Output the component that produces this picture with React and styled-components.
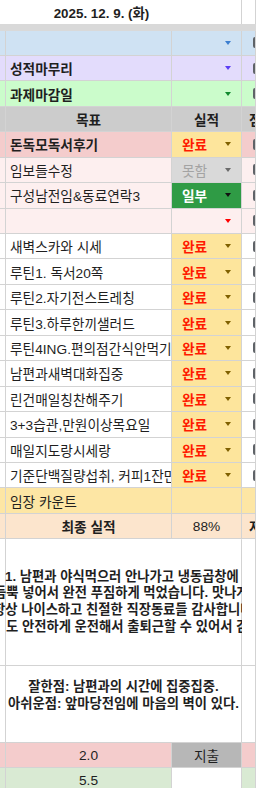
import styled, { createGlobalStyle } from "styled-components";

const GlobalStyle = createGlobalStyle`
  html, body { margin: 0; padding: 0; background: #fff; }
  body {
    font-family: "Liberation Sans", "Noto Sans CJK KR", sans-serif;
    overflow: hidden;
  }
`;

const ROW_H = 25.44;
const LINE = "#d3d3d3";

const Sheet = styled.div`
  width: 256px;
  height: 788px;
  overflow: hidden;
  font-size: 13.7px;
  color: #1f1f1f;
`;

const Row = styled.div`
  display: grid;
  grid-template-columns: 6px 166px 70px 1fr;
  height: ${(p) => p.$h || ROW_H}px;
  background: ${(p) => p.$bg || "#fff"};
`;

const Cell = styled.div`
  box-sizing: border-box;
  min-width: 0;
  border-right: 1px solid ${LINE};
  border-bottom: ${(p) => (p.$open ? "none" : `1px solid ${LINE}`)};
  background: ${(p) => p.$bg || "transparent"};
  display: flex;
  align-items: center;
  justify-content: ${(p) => (p.$center ? "center" : "flex-start")};
  padding-left: ${(p) => (p.$center ? 0 : 4)}px;
  font-weight: ${(p) => (p.$bold ? 700 : 400)};
  white-space: nowrap;
  overflow: hidden;
`;

const TitleCell = styled(Cell)`
  grid-column: 1 / 4;
  font-size: 13.4px;
  font-weight: 700;
  justify-content: center;
  padding: 0 38px 0 0;
  border-bottom: none;
`;

const Band = styled.div`
  height: 6.5px;
  background: #d9d9d9;
`;

const ChoiceCell = styled(Cell)`
  justify-content: space-between;
  padding: 0 10px;
  color: ${(p) => p.$color || "#1f1f1f"};
`;

const Arrow = styled.span`
  flex: none;
  width: 0;
  height: 0;
  margin-left: auto;
  border-left: 3.5px solid transparent;
  border-right: 3.5px solid transparent;
  border-top: 4px solid ${(p) => p.$color};
`;

const Box = styled.span`
  flex: none;
  box-sizing: border-box;
  width: 12px;
  height: 11px;
  margin-left: 7px;
  border: 2px solid #5f6368;
  border-radius: 2px;
`;

const EdgeText = styled.span`
  padding-left: 3px;
  font-weight: 700;
`;

const Note = styled(Cell)`
  grid-column: 2 / 4;
  flex-direction: column;
  justify-content: center;
  align-items: ${(p) => (p.$center ? "center" : "flex-start")};
  padding: 0;
  font-size: 13.3px;
  font-weight: 700;
  overflow: visible;
  clip-path: inset(0 0 0 -8px);
  line-height: 16.8px;
`;

const NoteLine = styled.div`
  white-space: nowrap;
  margin-left: ${(p) => p.$x || 0}px;
`;

const kinds = {
  done: { bg: "#fde59c", color: "#ff1a00", bold: true, arrow: "#7f6000" },
  miss: { bg: "#d9d9d9", color: "#a3a3a3", bold: false, arrow: "#6b6b6b" },
  part: { bg: "#2f9b45", color: "#ffffff", bold: true, arrow: "#111111" },
  empty: { bg: "#fdefef", color: "#1f1f1f", bold: false, arrow: "#ff0000" },
};

const categories = [
  { label: "", bg: "#cfe2f3", arrow: "#3d7fd0" },
  { label: "성적마무리", bg: "#e3dcfc", arrow: "#5b3df5" },
  { label: "과제마감일", bg: "#cbfccb", arrow: "#128a2f" },
];

const tasks = [
  { label: "돈독모독서후기", bold: true, bg: "#f4cccc", value: "완료", kind: "done" },
  { label: "임보들수정", bg: "#fdefef", value: "못함", kind: "miss" },
  { label: "구성남전임&동료연락3", bg: "#fdefef", value: "일부", kind: "part" },
  { label: "", bg: "#fdefef", value: "", kind: "empty" },
  { label: "새벽스카와 시세", value: "완료", kind: "done" },
  { label: "루틴1. 독서20쪽", value: "완료", kind: "done" },
  { label: "루틴2.자기전스트레칭", value: "완료", kind: "done" },
  { label: "루틴3.하루한끼샐러드", value: "완료", kind: "done" },
  { label: "루틴4ING.편의점간식안먹기", value: "완료", kind: "done" },
  { label: "남편과새벽대화집중", value: "완료", kind: "done" },
  { label: "린건매일칭찬해주기", value: "완료", kind: "done" },
  { label: "3+3습관,만원이상목요일", value: "완료", kind: "done" },
  { label: "매일지도랑시세랑", value: "완료", kind: "done" },
  { label: "기준단백질량섭취, 커피1잔만", value: "완료", kind: "done" },
];

function Choice({ kind, value }) {
  const k = kinds[kind];
  return (
    <ChoiceCell $bg={k.bg} $color={k.color} $bold={k.bold}>
      {value}
      <Arrow $color={k.arrow} />
    </ChoiceCell>
  );
}

export default function App() {
  return (
    <>
      <GlobalStyle />
      <Sheet>
        <Row $h={24}>
          <TitleCell>2025. 12. 9. (화)</TitleCell>
          <Cell $open />
        </Row>
        <Band />

        {categories.map((c, i) => (
          <Row key={i} $bg={c.bg}>
            <Cell />
            <Cell $bold>{c.label}</Cell>
            <ChoiceCell>
              <Arrow $color={c.arrow} />
            </ChoiceCell>
            <Cell><Box /></Cell>
          </Row>
        ))}

        <Row $bg="#cccccc">
          <Cell />
          <Cell $center $bold>목표</Cell>
          <Cell $center $bold>실적</Cell>
          <Cell><EdgeText>점수</EdgeText></Cell>
        </Row>

        {tasks.map((t, i) => (
          <Row key={i} $bg={t.bg}>
            <Cell />
            <Cell $bold={t.bold}>{t.label}</Cell>
            <Choice kind={t.kind} value={t.value} />
            <Cell><Box /></Cell>
          </Row>
        ))}

        <Row $bg="#fde6a4">
          <Cell />
          <Cell>임장 카운트</Cell>
          <Cell />
          <Cell />
        </Row>

        <Row $bg="#fce5cd">
          <Cell />
          <Cell $center $bold>최종 실적</Cell>
          <Cell $center>88%</Cell>
          <Cell><EdgeText>저축</EdgeText></Cell>
        </Row>

        <Row $h={126.7}>
          <Cell />
          <Note>
            <NoteLine $x={-1}>1. 남편과 야식먹으러 안나가고 냉동곱창에</NoteLine>
            <NoteLine $x={-12}>듬뿍 넣어서 완전 푸짐하게 먹었습니다. 맛나게 먹음</NoteLine>
            <NoteLine $x={-13}>항상 나이스하고 친절한 직장동료들 감사합니다.</NoteLine>
            <NoteLine>도 안전하게 운전해서 출퇴근할 수 있어서 감사</NoteLine>
          </Note>
          <Cell />
        </Row>

        <Row $h={77.3}>
          <Cell />
          <Note $center>
            <NoteLine>잘한점: 남편과의 시간에 집중집중.</NoteLine>
            <NoteLine>아쉬운점: 앞마당전임에 마음의 벽이 있다.</NoteLine>
            <NoteLine>&nbsp;</NoteLine>
          </Note>
          <Cell />
        </Row>

        <Row $bg="#f4cccc" $h={25}>
          <Cell />
          <Cell $center>2.0</Cell>
          <Cell $center $bg="#b7b7b7">지출</Cell>
          <Cell />
        </Row>

        <Row $bg="#d9ead3">
          <Cell />
          <Cell $center>5.5</Cell>
          <Cell $bg="#ffffff" />
          <Cell />
        </Row>
      </Sheet>
    </>
  );
}
